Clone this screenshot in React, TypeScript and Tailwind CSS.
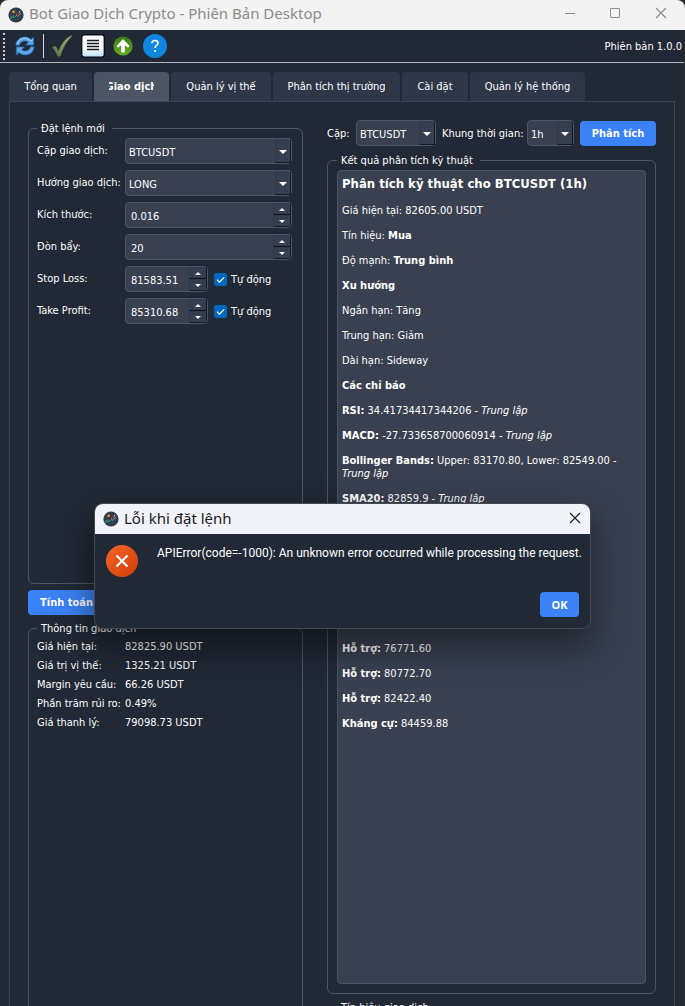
import React, { useState } from "react";

const tabs = [
  { label: "Tổng quan", width: "w-[83px]" },
  { label: "Giao dịch", width: "w-[75px]" },
  { label: "Quản lý vị thế", width: "w-[100px]" },
  { label: "Phân tích thị trường", width: "w-[127px]" },
  { label: "Cài đặt", width: "w-[66px]" },
  { label: "Quản lý hệ thống", width: "w-[115px]" },
];

const info = [
  ["Giá hiện tại:", "82825.90 USDT"],
  ["Giá trị vị thế:", "1325.21 USDT"],
  ["Margin yêu cầu:", "66.26 USDT"],
  ["Phần trăm rủi ro:", "0.49%"],
  ["Giá thanh lý:", "79098.73 USDT"],
];

function AppLogo() {
  return (
    <svg viewBox="0 0 16 16" className="size-4 shrink-0" aria-hidden="true">
      <circle cx="8" cy="8" r="7.6" fill="#2c3e50" />
      <path d="M3 11.5V9.5M5 10.8V8.6" stroke="#2ecc71" strokeWidth="1" />
      <path d="M6.5 10.5 8.5 8.5 10 9.5 13 6" stroke="#3fae8a" strokeWidth="1" fill="none" />
      <path d="M8.7 9V6.5M11 8V5" stroke="#e74c3c" strokeWidth="1" />
      <circle cx="5.6" cy="4.8" r="1.4" fill="#f39c12" />
      <circle cx="11.6" cy="4.6" r=".6" fill="#ecf0f1" />
    </svg>
  );
}

function RefreshIcon() {
  return (
    <svg viewBox="0 0 20 20" className="size-5" aria-hidden="true">
      <g fill="#5ba7e6" stroke="#2a6cb4" strokeWidth=".8" strokeLinejoin="round">
        <path d="M.8 9.2C1.3 4.2 5.2 1 9.8 1c2.5 0 4.6.9 6.2 2.5L18.6 1v8h-8l2.7-2.7A5 5 0 0 0 9.8 4.9C7 4.9 5 6.7 4.5 9.2Z" />
        <path d="M19.2 10.8C18.7 15.8 14.800 19 10.200 19c-2.500 0-4.600-.9-6.200-2.500L1.400 19v-8h8l-2.700 2.700a5 5 0 0 0 3.500 1.400c2.800 0 4.800-1.800 5.300-4.300Z" />
      </g>
      <path d="M2 8C2.8 4.3 6 2.2 9.7 2.2c2.5 0 4.500 1 6.300 3L17.600 3.500" stroke="#a9d6f8" strokeWidth="1" fill="none" />
    </svg>
  );
}

function CheckIcon() {
  return (
    <svg viewBox="0 0 22 24" className="h-6 w-[22px]" aria-hidden="true">
      <defs>
        <linearGradient id="check" x1="0" y1="1" x2="1" y2="0">
          <stop offset="0" stopColor="#526b3c" />
          <stop offset=".5" stopColor="#7f9867" />
          <stop offset="1" stopColor="#a5b68f" />
        </linearGradient>
      </defs>
      <path d="M1 13.5 4 11.7c1.500 1.300 2.600 3 3.400 5.200C10.500 9.500 14.500 4 20.800 1.300l.4.800C15.500 7.500 12 14 9.500 22.300L6.600 22.800C5.300 18.800 3.600 15.800 1 13.500Z" fill="url(#check)" stroke="#3c4f2d" strokeWidth=".5" />
    </svg>
  );
}

function ListIcon() {
  return (
    <svg viewBox="0 0 24 24" className="size-6" aria-hidden="true">
      <defs>
        <linearGradient id="sheet" x1="0" y1="0" x2="0" y2="1">
          <stop offset=".6" stopColor="#fff" />
          <stop offset="1" stopColor="#b7dcfa" />
        </linearGradient>
      </defs>
      <rect x=".7" y=".7" width="22.6" height="22.6" rx="2.5" fill="url(#sheet)" stroke="#0b1018" strokeWidth="1.4" />
      <path d="M6 6.5h12M6 9.5h12M6 12.5h12M6 15.5h12" stroke="#15181d" strokeWidth="1.5" />
    </svg>
  );
}

function UpIcon() {
  return (
    <svg viewBox="0 0 20 20" className="size-5" aria-hidden="true">
      <defs>
        <linearGradient id="up" x1="0" y1="0" x2="0" y2="1">
          <stop offset="0" stopColor="#3c7a14" />
          <stop offset="1" stopColor="#66ad1e" />
        </linearGradient>
      </defs>
      <circle cx="10" cy="10" r="9.6" fill="url(#up)" />
      <path d="m10 3 6.500 7-1.500 1.700-3.200-2.400V16.500H8.200V9.300L5 11.700 3.500 10Z" fill="#fff" />
    </svg>
  );
}

function HelpIcon() {
  return (
    <svg viewBox="0 0 24 24" className="size-6" aria-hidden="true">
      <circle cx="12" cy="12" r="12" fill="#0f87df" />
      <path d="M9 9.2C9 7.4 10.3 6.500 12 6.500s3 1 3 2.600c0 2.300-2.900 2.300-2.900 4.900" stroke="#fff" strokeWidth="1.6" fill="none" />
      <circle cx="12.1" cy="17" r="1.1" fill="#fff" />
    </svg>
  );
}

function CloseGlyph() {
  return (
    <svg viewBox="0 0 12 12" className="size-3" aria-hidden="true">
      <path d="m1 1 10 10M11 1 1 11" stroke="currentColor" strokeWidth="1.1" />
    </svg>
  );
}

function Select({ id, value, options, className }: { id: string; value: string; options: string[]; className: string }) {
  return (
    <div className={`relative ${className}`}>
      <select
        id={id}
        defaultValue={value}
        className="block h-[26px] w-full appearance-none rounded border border-[#4b5563] bg-[#394151] pt-[3px] pl-[3px] text-[11px] leading-4 text-white outline-none"
      >
        {options.map((o) => (
          <option key={o}>{o}</option>
        ))}
      </select>
      <span className="pointer-events-none absolute top-0.5 right-px bottom-px flex w-4 items-center justify-center border border-t-[#2f394b] border-r-[#121822] border-b-[#121822] border-l-[#2f394b] bg-[#363f50]">
        <svg viewBox="0 0 8 4" className="h-1 w-2" aria-hidden="true">
          <path d="M0 0h8L4 4Z" fill="#fff" />
        </svg>
      </span>
    </div>
  );
}

function Spin({ id, value, className, step }: { id: string; value: string; className: string; step: number }) {
  const [text, setText] = useState(value);
  const decimals = (value.split(".")[1] || "").length;
  const bump = (d: number) => setText((Number(text) + d * step).toFixed(decimals));
  const button =
    "flex h-3 w-full items-center justify-center border border-t-[#2f394b] border-r-[#121822] border-b-[#121822] border-l-[#2f394b] bg-[#363f50]";
  return (
    <div className={`flex h-[26px] overflow-hidden rounded border border-[#4b5563] bg-[#394151] ${className}`}>
      <input
        id={id}
        value={text}
        onChange={(e) => setText(e.target.value)}
        className="min-w-0 flex-1 bg-transparent pt-[3px] pl-[5px] text-[11px] leading-4 text-white outline-none"
      />
      <div className="w-[18px] shrink-0">
        <button type="button" aria-label="Tăng" onClick={() => bump(1)} className={button}>
          <svg viewBox="0 0 6 3" className="h-[3px] w-1.5" aria-hidden="true">
            <path d="M0 3h6L3 0Z" fill="#fff" />
          </svg>
        </button>
        <button type="button" aria-label="Giảm" onClick={() => bump(-1)} className={button}>
          <svg viewBox="0 0 6 3" className="h-[3px] w-1.5" aria-hidden="true">
            <path d="M0 0h6L3 3Z" fill="#fff" />
          </svg>
        </button>
      </div>
    </div>
  );
}

function Auto() {
  return (
    <label className="flex items-center gap-1">
      <span className="grid size-[13px]">
        <input type="checkbox" defaultChecked className="peer col-start-1 row-start-1 size-[13px] appearance-none rounded-xs border border-[#0067c0] checked:bg-[#0067c0]" />
        <svg viewBox="0 0 13 13" className="pointer-events-none invisible col-start-1 row-start-1 size-[13px] peer-checked:visible" aria-hidden="true">
          <path d="m3 6.7 2.400 2.400L10.200 4.300" stroke="#fff" strokeWidth="1.2" fill="none" />
        </svg>
      </span>
      <span>Tự động</span>
    </label>
  );
}

function Row({ id, label, children }: { id: string; label: string; children: React.ReactNode }) {
  return (
    <div className="grid grid-cols-[82px_1fr] items-center gap-1.5">
      <label htmlFor={id} className="pb-0.5 whitespace-nowrap">
        {label}
      </label>
      <div className="flex items-center gap-1.5">{children}</div>
    </div>
  );
}

const group = "min-w-0 rounded-md border border-[#4b5563]";
const legend = "pr-[7px] pl-1 leading-[15px]";
const primary = "h-[25px] rounded bg-[#3b82f6] text-[11px] font-bold text-white";

function Indicator({ name, value, verdict }: { name: string; value: string; verdict?: string }) {
  return (
    <p>
      <b>{name}:</b> {value}
      {verdict && (
        <>
          {" - "}
          <i>{verdict}</i>
        </>
      )}
    </p>
  );
}

export default function App() {
  const [tab, setTab] = useState(1);
  const [open, setOpen] = useState(true);
  return (
    <div className="relative flex h-screen flex-col overflow-hidden bg-[#2a2a2c] font-['DejaVu_Sans_Condensed','Noto_Sans',sans-serif] text-[11px] leading-[13px] text-white">
      <header className="flex h-[30px] shrink-0 items-center rounded-t-lg bg-[#f3f3f3] pl-2 font-['Noto_Sans',sans-serif] text-[#8c8c8c]">
        <AppLogo />
        <h1 className="ml-[5px] flex-1 pb-1 text-[15px] leading-5 whitespace-nowrap">Bot Giao Dịch Crypto - Phiên Bản Desktop</h1>
        <button type="button" aria-label="Thu nhỏ" className="flex h-full w-[45px] items-center justify-center pb-1">
          <svg viewBox="0 0 10 10" className="size-2.5" aria-hidden="true">
            <path d="M0 5.5h10" stroke="currentColor" />
          </svg>
        </button>
        <button type="button" aria-label="Phóng to" className="flex h-full w-[45px] items-center justify-center pb-1">
          <svg viewBox="0 0 10 10" className="size-2.5" aria-hidden="true">
            <rect x=".5" y=".5" width="9" height="9" rx=".5" stroke="currentColor" fill="none" />
          </svg>
        </button>
        <button type="button" aria-label="Đóng cửa sổ" className="flex h-full w-12 items-center justify-center pb-1">
          <CloseGlyph />
        </button>
      </header>

      <div className="mr-px flex h-[33px] shrink-0 items-center border-b border-[#b4b7bc] bg-[#212936] pr-0.5 pl-[3px]">
        <span className="h-[27px] border-l-2 border-dotted border-[#c8cacd]" />
        <button type="button" aria-label="Làm mới" className="ml-2.5">
          <RefreshIcon />
        </button>
        <span className="mr-[7px] ml-2 h-6 w-px bg-[#d5d7da]" />
        <button type="button" aria-label="Xác nhận">
          <CheckIcon />
        </button>
        <button type="button" aria-label="Danh sách" className="ml-2">
          <ListIcon />
        </button>
        <button type="button" aria-label="Cập nhật" className="ml-2">
          <UpIcon />
        </button>
        <button type="button" aria-label="Trợ giúp" className="ml-2.5">
          <HelpIcon />
        </button>
        <span className="ml-auto">Phiên bản 1.0.0</span>
      </div>

      <div className="mr-px flex-1 bg-[#212936] px-[9px] pt-[9px]">
        <nav role="tablist" className="flex gap-0.5">
          {tabs.map((t, i) => (
            <button
              key={t.label}
              type="button"
              role="tab"
              aria-selected={i === tab}
              onClick={() => setTab(i)}
              className={`flex h-[29px] justify-center rounded-t px-[15px] leading-[30px] whitespace-nowrap ${t.width} ${i === tab ? "bg-[#4b5563] font-bold" : "bg-[#2d3748]"}`}
            >
              <span className="flex w-full justify-center overflow-hidden">
                <span>{t.label}</span>
              </span>
            </button>
          ))}
        </nav>

        <main className="grid grid-cols-[275fr_329fr] gap-6 border border-[#3a4454] px-[18px] pt-[18px]">
          <div className="flex flex-col gap-1.5 pt-px">
            <fieldset className={`${group} min-h-[463px] pt-0.5 pr-2.5 pl-2`}>
              <legend className={legend}>Đặt lệnh mới</legend>
              <div className="flex flex-col gap-1.5">
                <Row id="pair" label="Cặp giao dịch:">
                  <Select id="pair" value="BTCUSDT" options={["BTCUSDT", "ETHUSDT"]} className="flex-1" />
                </Row>
                <Row id="side" label="Hướng giao dịch:">
                  <Select id="side" value="LONG" options={["LONG", "SHORT"]} className="flex-1" />
                </Row>
                <Row id="size" label="Kích thước:">
                  <Spin id="size" value="0.016" step={0.001} className="flex-1" />
                </Row>
                <Row id="leverage" label="Đòn bẩy:">
                  <Spin id="leverage" value="20" step={1} className="flex-1" />
                </Row>
                <Row id="sl" label="Stop Loss:">
                  <Spin id="sl" value="81583.51" step={1} className="w-[83px]" />
                  <Auto />
                </Row>
                <Row id="tp" label="Take Profit:">
                  <Spin id="tp" value="85310.68" step={1} className="w-[83px]" />
                  <Auto />
                </Row>
              </div>
            </fieldset>
            <button type="button" className={`${primary} self-start px-3`}>
              Tính toán
            </button>
            <fieldset className={`${group} flex-1 px-2 pt-1`}>
              <legend className={legend}>Thông tin giao dịch</legend>
              <dl className="grid grid-cols-[82px_1fr] gap-1.5 whitespace-nowrap">
                {info.map(([k, v]) => (
                  <React.Fragment key={k}>
                    <dt>{k}</dt>
                    <dd>{v}</dd>
                  </React.Fragment>
                ))}
              </dl>
            </fieldset>
          </div>

          <div className="flex flex-col gap-1.5">
            <div className="mb-px flex items-center gap-1.5 whitespace-nowrap">
              <label htmlFor="apair" className="w-[23px]">
                Cặp:
              </label>
              <Select id="apair" value="BTCUSDT" options={["BTCUSDT", "ETHUSDT"]} className="w-20" />
              <label htmlFor="frame" className="w-[79px]">
                Khung thời gian:
              </label>
              <Select id="frame" value="1h" options={["1h", "4h", "1d"]} className="w-[47px]" />
              <button type="button" className={`${primary} flex-1`}>
                Phân tích
              </button>
            </div>
            <fieldset className={`${group} px-[9px] pt-0.5 pb-[9px]`}>
              <legend className={legend}>Kết quả phân tích kỹ thuật</legend>
              <article className="flex min-h-[814px] flex-col gap-3 rounded border border-[#4b5563] bg-[#394151] px-1 py-[5px]">
                <h2 className="text-[13px] leading-4 font-bold">Phân tích kỹ thuật cho BTCUSDT (1h)</h2>
                <p>Giá hiện tại: 82605.00 USDT</p>
                <p>
                  Tín hiệu: <b>Mua</b>
                </p>
                <p>
                  Độ mạnh: <b>Trung bình</b>
                </p>
                <h3 className="font-bold">Xu hướng</h3>
                <p>Ngắn hạn: Tăng</p>
                <p>Trung hạn: Giảm</p>
                <p>Dài hạn: Sideway</p>
                <h3 className="font-bold">Các chỉ báo</h3>
                <Indicator name="RSI" value="34.41734417344206" verdict="Trung lập" />
                <Indicator name="MACD" value="-27.733658700060914" verdict="Trung lập" />
                <Indicator name="Bollinger Bands" value="Upper: 83170.80, Lower: 82549.00" verdict="Trung lập" />
                <Indicator name="SMA20" value="82859.9" verdict="Trung lập" />
                <h3 className="mt-[100px] font-bold">Hỗ trợ và Kháng cự</h3>
                <Indicator name="Hỗ trợ" value="76771.60" />
                <Indicator name="Hỗ trợ" value="80772.70" />
                <Indicator name="Hỗ trợ" value="82422.40" />
                <Indicator name="Kháng cự" value="84459.88" />
              </article>
            </fieldset>
            <fieldset className={`${group} h-40 px-[9px]`}>
              <legend className={legend}>Tín hiệu giao dịch</legend>
            </fieldset>
          </div>
        </main>
      </div>

      {open && (
        <div
          role="alertdialog"
          aria-labelledby="dialog-title"
          className="absolute top-[504px] left-[95px] w-[495px] rounded-lg bg-[#212936] font-['Noto_Sans',sans-serif] shadow-[0_0_0_1px_#44484f,0_16px_36px_4px_rgba(0,0,0,0.45)]"
        >
          <div className="flex h-[30px] items-center rounded-t-lg bg-[#f0f3f9] pl-2 text-[#1b1b1b]">
            <AppLogo />
            <h2 id="dialog-title" className="ml-[5px] flex-1 pb-0.5 text-[15px] leading-5">
              Lỗi khi đặt lệnh
            </h2>
            <button type="button" aria-label="Đóng" onClick={() => setOpen(false)} className="flex h-full w-[30px] items-center justify-center pb-0.5">
              <CloseGlyph />
            </button>
          </div>
          <div className="flex gap-[19px] px-[11px] pt-[11px]">
            <svg viewBox="0 0 32 32" className="size-8 shrink-0" aria-hidden="true">
              <defs>
                <linearGradient id="err" x1="0" y1="0" x2="1" y2="1">
                  <stop offset="0" stopColor="#f4672a" />
                  <stop offset="1" stopColor="#d13a05" />
                </linearGradient>
              </defs>
              <circle cx="16" cy="16" r="16" fill="url(#err)" />
              <path d="m10.5 10.5 11 11M21.5 10.5l-11 11" stroke="#fff" strokeWidth="2.2" />
            </svg>
            <p className="font-['Roboto','Noto_Sans',sans-serif] text-[12px] leading-4 whitespace-nowrap">APIError(code=-1000): An unknown error occurred while processing the request.</p>
          </div>
          <div className="flex justify-end px-[11px] pt-[15px] pb-[11px]">
            <button type="button" onClick={() => setOpen(false)} className={`${primary} w-[39px]`}>
              OK
            </button>
          </div>
        </div>
      )}
    </div>
  );
}
